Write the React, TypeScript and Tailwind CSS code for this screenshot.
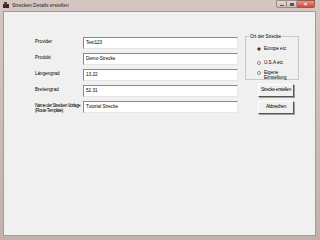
import React from "react";

const font = { fontFamily: '"Liberation Sans", Arial, sans-serif' };

function Field({ value }: { value: string }) {
  return (
    <div className="w-[155px] h-[12px] bg-white border border-t-[#8a8a8a] border-l-[#8a8a8a] border-b-[#e6e6e6] border-r-[#e6e6e6] flex items-center pl-[2px] text-[4.6px] text-black leading-none whitespace-nowrap">
      {value}
    </div>
  );
}

function Radio({ checked, children, className }: { checked?: boolean; children: React.ReactNode; className?: string }) {
  return (
    <div className={"flex items-start gap-[3px] " + (className ?? "")}>
      <div className="mt-[0.5px] w-[4px] h-[4px] rounded-full border border-[#8a8a8a] bg-white flex items-center justify-center shrink-0">
        {checked && <div className="w-[2px] h-[2px] rounded-full bg-black" />}
      </div>
      <div className="text-[4.6px] leading-[5px] text-black whitespace-nowrap">{children}</div>
    </div>
  );
}

function Btn({ children }: { children: React.ReactNode }) {
  return (
    <div className="w-[36px] h-[13px] bg-[#f0f0f0] border border-t-white border-l-white border-b-[#555] border-r-[#555] shadow-[1px_1px_0_#a0a0a0] flex items-center justify-center text-[4.6px] tracking-[-0.25px] text-black leading-none whitespace-nowrap">
      {children}
    </div>
  );
}

export default function App() {
  const rows: [React.ReactNode, string, boolean][] = [
    ["Provider", "Test123", false],
    ["Produkt", "Demo-Strecke", false],
    ["Längengrad", "13.22", false],
    ["Breitengrad", "52.31", false],
    [
      <>
        Name der Strecken Vorlage
        <br />
        (Route Template)
      </>,
      "Tutorial Strecke",
      true,
    ],
  ];
  return (
    <div
      style={font}
      className="w-[320px] h-[240px] flex flex-col bg-gradient-to-b from-[#d6c6c2] to-[#c2b0ac] overflow-hidden"
    >
      {/* title bar */}
      <div className="h-[11px] flex items-start shrink-0">
        <div className="ml-[3px] mt-[2px] w-[6px] h-[6px] flex items-end">
          <svg width="6" height="6" viewBox="0 0 6 6">
            <rect x="0" y="2" width="6" height="4" fill="#3a2a22" />
            <rect x="1" y="0" width="3" height="3" fill="#5a4034" />
          </svg>
        </div>
        <div className="ml-[3px] mt-[2px] text-[5px] leading-[6px] text-[#222] whitespace-nowrap">Strecken Details erstellen</div>
        <div className="ml-auto mr-[5px] flex items-start">
          <div className="w-[11px] h-[8px] border border-[#9a8a88] bg-gradient-to-b from-[#e4d8d6] to-[#cbbcb9] rounded-bl-[2px] flex items-end justify-center pb-[1px]">
            <div className="w-[4px] h-[1px] bg-[#555]" />
          </div>
          <div className="w-[10px] h-[8px] border border-l-0 border-[#9a8a88] bg-gradient-to-b from-[#e4d8d6] to-[#cbbcb9] flex items-center justify-center">
            <div className="w-[4px] h-[3px] border border-t-2 border-[#555]" />
          </div>
          <div className="w-[18px] h-[8px] border border-l-0 border-[#9a5a54] bg-gradient-to-b from-[#e4968a] to-[#cc4a3a] rounded-br-[2px] flex items-center justify-center text-white text-[6px] leading-none font-bold">
            ×
          </div>
        </div>
      </div>
      {/* client area */}
      <div className="flex-1 ml-[3px] mr-[4px] mb-[4px] bg-[#f0f0f0] border border-[#a89896] flex items-start pt-[25px] pl-[31px]">
        <div className="flex flex-col gap-[4px]">
          {rows.map(([label, value, narrow], i) => (
            <div key={i} className="flex items-start">
              <div
                className={
                  narrow
                    ? "w-[48px] pt-[2px] text-[4.6px] tracking-[-0.45px] leading-[5px] text-black whitespace-nowrap"
                    : "w-[48px] pt-[2px] text-[4.6px] leading-[5px] text-black whitespace-nowrap"
                }
              >
                {label}
              </div>
              <Field value={value} />
            </div>
          ))}
        </div>
        <div className="ml-[7px] w-[54px] flex flex-col items-end">
          <div className="relative w-[54px] h-[44px] border border-[#c8c8c8] mt-[-1px] flex flex-col pt-[9px] pl-[11px]">
            <div className="absolute -top-[3px] left-[3px] bg-[#f0f0f0] px-[1px] text-[4.6px] leading-[5px] text-black whitespace-nowrap">
              Ort der Strecke
            </div>
            <Radio checked>Europe etc</Radio>
            <Radio className="mt-[9px]">U.S.A etc</Radio>
            <Radio className="mt-[5px]">
              Eigene
              <br />
              Einstellung
            </Radio>
          </div>
          <div className="mt-[4px] mr-[5px] flex flex-col gap-[4px]">
            <Btn>Strecke erstellen</Btn>
            <Btn>Abbrechen</Btn>
          </div>
        </div>
      </div>
    </div>
  );
}
